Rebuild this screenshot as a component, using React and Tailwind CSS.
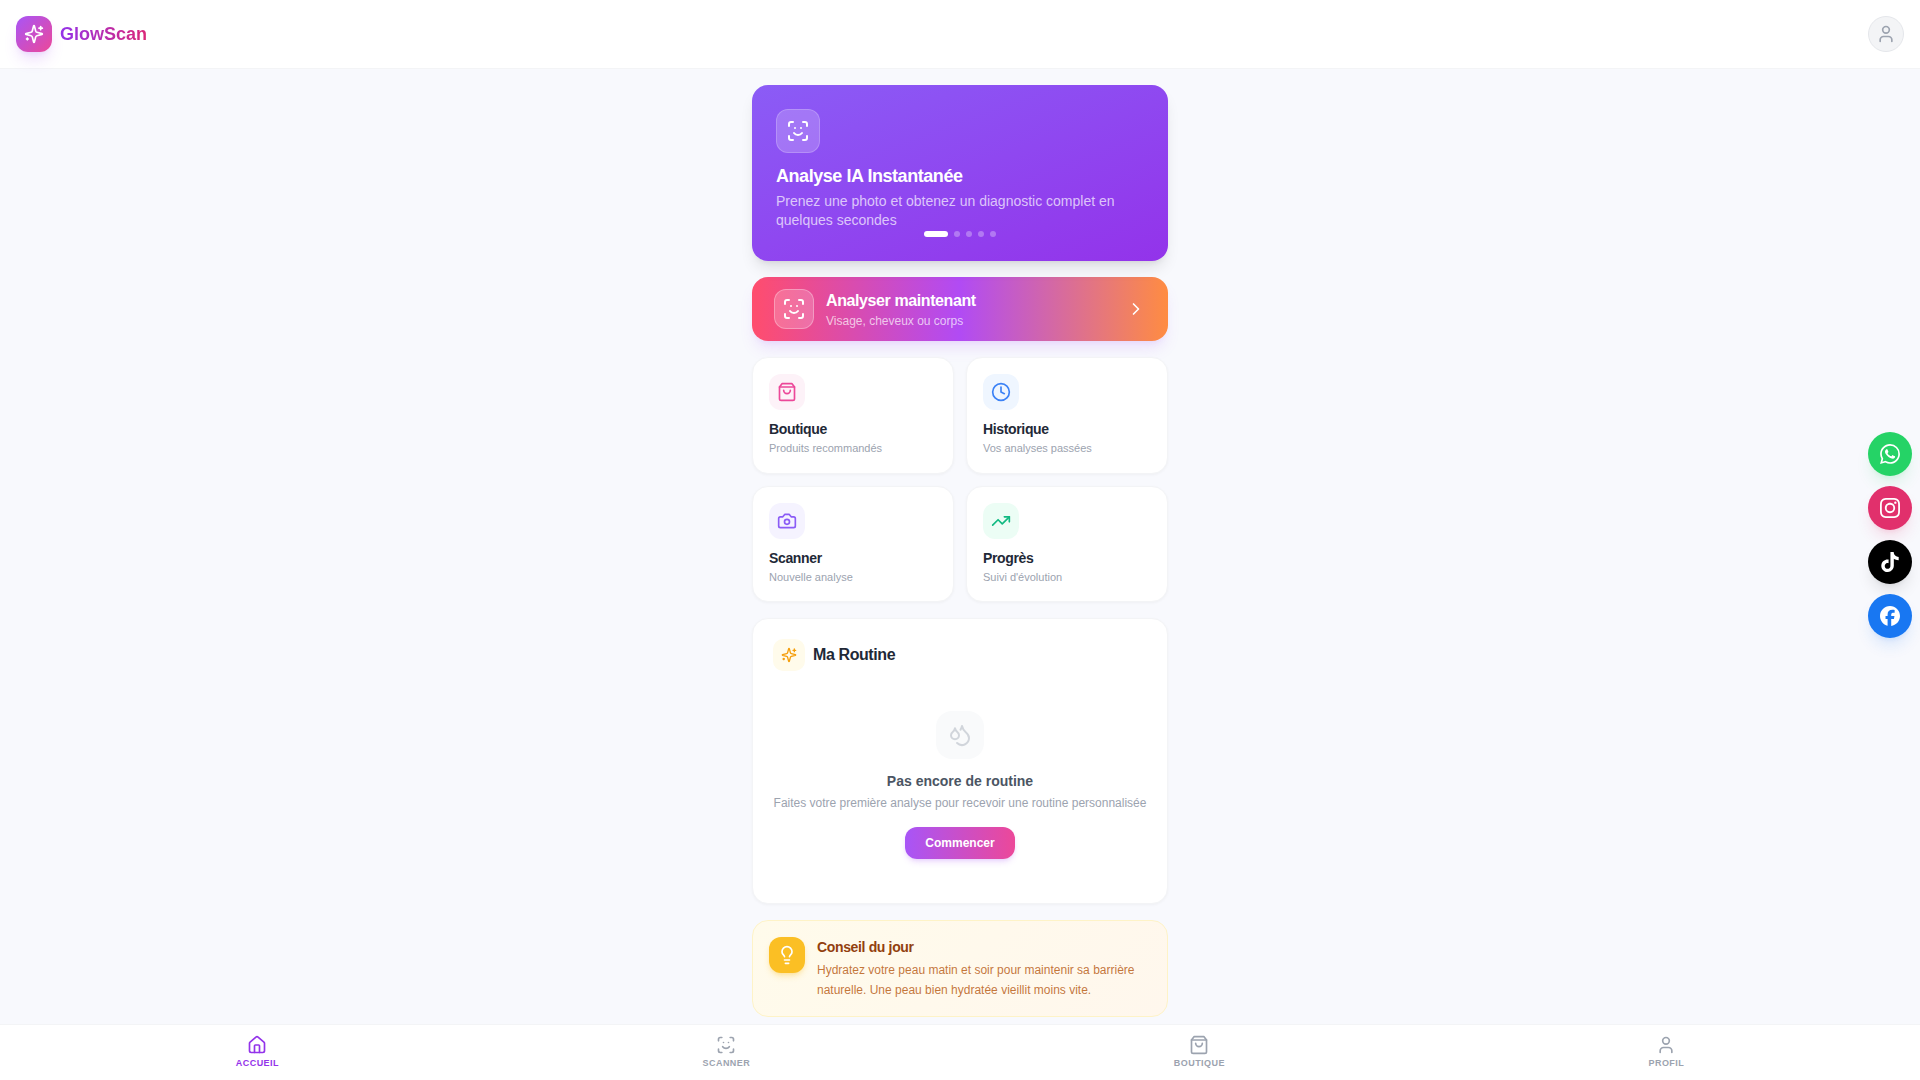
import { ChevronRight, Clock, Droplets, House, Lightbulb, ScanFace, TrendingUp, User } from "lucide-react";
import { SiFacebook, SiInstagram, SiTiktok, SiWhatsapp } from "react-icons/si";

function LineIcon({ size = 20, children }) {
  return (
    <svg
      width={size}
      height={size}
      viewBox="0 0 24 24"
      fill="none"
      stroke="currentColor"
      strokeWidth="2"
      strokeLinecap="round"
      strokeLinejoin="round"
      aria-hidden="true"
    >
      {children}
    </svg>
  );
}

function Sparkles({ size }) {
  return (
    <LineIcon size={size}>
      <path d="M9.937 15.5A2 2 0 0 0 8.5 14.063l-6.135-1.582a.5.5 0 0 1 0-.962L8.5 9.936A2 2 0 0 0 9.937 8.5l1.582-6.135a.5.5 0 0 1 .963 0L14.063 8.5A2 2 0 0 0 15.5 9.937l6.135 1.581a.5.5 0 0 1 0 .964L15.5 14.063a2 2 0 0 0-1.437 1.437l-1.582 6.135a.5.5 0 0 1-.963 0z" />
      <path d="M20 3v4" />
      <path d="M22 5h-4" />
      <path d="M4 17v2" />
      <path d="M5 18H3" />
    </LineIcon>
  );
}

function Bag({ size }) {
  return (
    <LineIcon size={size}>
      <path d="M6 2 3 6v14a2 2 0 0 0 2 2h14a2 2 0 0 0 2-2V6l-3-4Z" />
      <path d="M3 6h18" />
      <path d="M16 10a4 4 0 0 1-8 0" />
    </LineIcon>
  );
}

function Camera({ size }) {
  return (
    <LineIcon size={size}>
      <path d="M14.5 4h-5L7 7H4a2 2 0 0 0-2 2v9a2 2 0 0 0 2 2h16a2 2 0 0 0 2-2V9a2 2 0 0 0-2-2h-3l-2.5-3z" />
      <circle cx="12" cy="13" r="3" />
    </LineIcon>
  );
}

const shortcuts = [
  { title: "Boutique", text: "Produits recommandés", Icon: Bag, tint: "bg-[#fdf2f8] text-[#ec4899]" },
  { title: "Historique", text: "Vos analyses passées", Icon: Clock, tint: "bg-[#eff6ff] text-[#3b82f6]" },
  { title: "Scanner", text: "Nouvelle analyse", Icon: Camera, tint: "bg-[#f5f3ff] text-[#8b5cf6]" },
  { title: "Progrès", text: "Suivi d'évolution", Icon: TrendingUp, tint: "bg-[#ecfdf5] text-[#10b981]" },
];

const socials = [
  { name: "WhatsApp", Icon: SiWhatsapp, tint: "bg-[#25d366] shadow-[#25d366]/15" },
  { name: "Instagram", Icon: SiInstagram, tint: "bg-[#e1306c] shadow-[#e1306c]/15" },
  { name: "TikTok", Icon: SiTiktok, tint: "bg-black shadow-black/10" },
  { name: "Facebook", Icon: SiFacebook, tint: "bg-[#1877f2] shadow-[#1877f2]/15" },
];

const tabs = [
  { label: "Accueil", Icon: House, color: "text-[#9333ea]", active: true },
  { label: "Scanner", Icon: ScanFace, color: "text-[#9ca3af]" },
  { label: "Boutique", Icon: Bag, color: "text-[#9ca3af]" },
  { label: "Profil", Icon: User, color: "text-[#9ca3af]" },
];

function Header() {
  return (
    <header className="flex items-center justify-between border-b border-[#f3f4f6] bg-white p-4">
      <div className="flex items-center gap-2">
        <div className="flex size-9 items-center justify-center rounded-xl bg-[linear-gradient(135deg,#a855f7,#ec4899)] text-white shadow-lg shadow-[#a855f7]/20">
          <Sparkles size={20} />
        </div>
        <span className="bg-[linear-gradient(90deg,#9333ea,#db2777)] bg-clip-text text-lg font-bold text-transparent">
          GlowScan
        </span>
      </div>
      <button
        aria-label="Profil"
        className="flex size-9 items-center justify-center rounded-full border border-[#e5e7eb] bg-[#f3f4f6] text-[#9ca3af]"
      >
        <User size={20} />
      </button>
    </header>
  );
}

function Hero() {
  return (
    <section className="relative h-44 rounded-2xl bg-[linear-gradient(160deg,#8b5cf6,#9333ea)] p-6 text-white shadow-lg">
      <div className="flex size-11 items-center justify-center rounded-xl border border-white/20 bg-white/20">
        <ScanFace size={24} />
      </div>
      <h2 className="mt-3 text-lg leading-[22px] font-bold tracking-tight">Analyse IA Instantanée</h2>
      <p className="mt-[5px] text-sm leading-snug text-white/70">
        Prenez une photo et obtenez un diagnostic complet en quelques secondes
      </p>
      <div className="absolute inset-x-0 bottom-6 flex justify-center gap-1.5">
        <button aria-label="Diapositive 1" className="h-1.5 w-6 rounded-full bg-white" />
        {[2, 3, 4, 5].map((n) => (
          <button key={n} aria-label={`Diapositive ${n}`} className="size-1.5 rounded-full bg-white/30" />
        ))}
      </div>
    </section>
  );
}

function Routine() {
  return (
    <section className="rounded-2xl border border-[#f3f4f6] bg-white p-5 shadow-[0_1px_3px_rgba(0,0,0,0.04)]">
      <div className="flex items-center gap-2">
        <div className="flex size-8 items-center justify-center rounded-[10px] bg-[#fffbeb] text-[#f59e0b]">
          <Sparkles size={16} />
        </div>
        <h2 className="text-base font-bold tracking-tight text-[#1f2937]">Ma Routine</h2>
      </div>
      <div className="mt-4 flex flex-col items-center py-6 text-center">
        <div className="flex size-12 items-center justify-center rounded-2xl bg-[#f9fafb] text-[#d1d5db]">
          <Droplets size={24} />
        </div>
        <h3 className="mt-3 text-sm font-bold text-[#4b5563]">Pas encore de routine</h3>
        <p className="mt-1 text-xs text-[#9ca3af]">
          Faites votre première analyse pour recevoir une routine personnalisée
        </p>
        <button className="mt-4 rounded-xl bg-[linear-gradient(90deg,#a855f7,#ec4899)] px-5 py-2 text-xs font-bold text-white shadow-md shadow-[#a855f7]/20">
          Commencer
        </button>
      </div>
    </section>
  );
}

function Tip() {
  return (
    <section className="flex gap-3 rounded-2xl border border-[#fef3c7] bg-[linear-gradient(135deg,#fffbeb,#fff7ed)] p-4">
      <div className="flex size-9 shrink-0 items-center justify-center rounded-xl bg-[#fbbf24] text-white shadow-md shadow-[#fbbf24]/30">
        <Lightbulb size={20} />
      </div>
      <div>
        <h2 className="text-sm font-bold tracking-tight text-[#92400e]">Conseil du jour</h2>
        <p className="mt-1 text-xs leading-relaxed text-[#b45309]/80">
          Hydratez votre peau matin et soir pour maintenir sa barrière naturelle. Une peau bien hydratée vieillit moins
          vite.
        </p>
      </div>
    </section>
  );
}

export default function App() {
  return (
    <div className="min-h-screen bg-[#f8f9fd] font-['Liberation_Sans',sans-serif]">
      <Header />
      <main className="mx-auto flex max-w-md flex-col gap-4 px-4 pt-4 pb-14">
        <Hero />
        <button className="flex items-center gap-3 rounded-2xl bg-[linear-gradient(90deg,#ff4d6d,#b14bf4,#ff8c42)] px-[22px] py-3 text-left text-white shadow-lg shadow-[#a855f7]/15">
          <span className="flex size-10 items-center justify-center rounded-xl border border-white/30 bg-white/20">
            <ScanFace size={24} />
          </span>
          <span className="flex-1">
            <span className="block text-base leading-6 font-bold tracking-tight">Analyser maintenant</span>
            <span className="block text-xs text-white/70">Visage, cheveux ou corps</span>
          </span>
          <ChevronRight size={20} />
        </button>
        <div className="grid grid-cols-2 gap-3">
          {shortcuts.map(({ title, text, Icon, tint }) => (
            <button
              key={title}
              className="rounded-2xl border border-[#f3f4f6] bg-white p-4 text-left shadow-[0_1px_3px_rgba(0,0,0,0.04)]"
            >
              <span className={`flex size-9 items-center justify-center rounded-xl ${tint}`}>
                <Icon size={20} />
              </span>
              <span className="mt-2.5 block text-sm leading-[18px] font-bold tracking-tight text-[#1f2937]">
                {title}
              </span>
              <span className="mt-0.5 block text-[11px] leading-normal text-[#9ca3af]">{text}</span>
            </button>
          ))}
        </div>
        <Routine />
        <Tip />
      </main>

      <div className="fixed top-[40%] right-2 flex flex-col gap-2.5">
        {socials.map(({ name, Icon, tint }) => (
          <a
            key={name}
            href="#"
            aria-label={name}
            className={`flex size-11 items-center justify-center rounded-full text-white shadow-lg ${tint}`}
          >
            <Icon size={20} />
          </a>
        ))}
      </div>

      <nav className="fixed inset-x-0 bottom-0 flex h-14 items-center justify-around border-t border-[#f3f4f6] bg-white px-6">
        {tabs.map(({ label, Icon, color, active }) => (
          <a
            key={label}
            href="#"
            aria-current={active ? "page" : undefined}
            className={`flex flex-col items-center gap-0.5 ${color}`}
          >
            <Icon size={20} />
            <span className="text-[9px] leading-normal font-bold tracking-wider uppercase">{label}</span>
          </a>
        ))}
      </nav>
    </div>
  );
}
